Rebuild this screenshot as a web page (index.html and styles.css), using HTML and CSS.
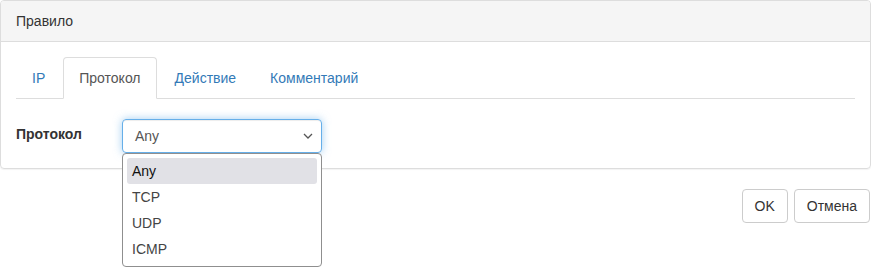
FILE: index.html
```html
<!DOCTYPE html>
<html lang="ru">
<head>
  <meta charset="UTF-8" />
  <title>Правило</title>
  <link rel="stylesheet" href="styles.css">
</head>
<body>

<div class="panel">
  <div class="panel-heading">Правило</div>
  <div class="panel-body">
    <ul class="tabs">
      <li><a href="#ip">IP</a></li>
      <li class="active"><a href="#proto">Протокол</a></li>
      <li><a href="#action">Действие</a></li>
      <li><a href="#comment">Комментарий</a></li>
    </ul>
    <div class="form-row">
      <label class="form-label">Протокол</label>
      <div class="select-wrap">
        <div class="select focused">
          <span>Any</span>
          <svg class="chevron" width="10" height="6" viewBox="0 0 10 6"><path d="M1 1l4 4 4-4" fill="none" stroke="#555" stroke-width="1.3"/></svg>
        </div>
        <ul class="dropdown">
          <li class="selected">Any</li>
          <li>TCP</li>
          <li>UDP</li>
          <li>ICMP</li>
        </ul>
      </div>
    </div>
  </div>
</div>

<div class="actions">
  <button class="btn">OK</button>
  <button class="btn">Отмена</button>
</div>

</body>
</html>
```
FILE: styles.css
```css
html, body {
  min-height: 268px;
}
body {
  margin: 0;
  font-family: "Liberation Sans", Arial, sans-serif;
  font-size: 14px;
  line-height: 20px;
  color: #333;
  background: #fff;
}
.panel {
  width: 869px;
  border: 1px solid #ddd;
  border-radius: 4px;
  box-shadow: 0 1px 1px rgba(0, 0, 0, .05);
}
.panel-heading {
  background: #f5f5f5;
  border-bottom: 1px solid #ddd;
  border-radius: 3px 3px 0 0;
  padding: 10px 15px;
}
.panel-body {
  padding: 15px;
}
.tabs {
  display: flex;
  list-style: none;
  margin: 0;
  padding: 0;
  border-bottom: 1px solid #ddd;
}
.tabs li {
  margin-right: 2px;
  margin-bottom: -1px;
}
.tabs a {
  display: block;
  padding: 10px 15px;
  border: 1px solid transparent;
  border-radius: 4px 4px 0 0;
  color: #337ab7;
  text-decoration: none;
}
.tabs .active a {
  color: #555;
  background: #fff;
  border-color: #ddd #ddd transparent;
}
.form-row {
  display: flex;
  margin-top: 20px;
}
.form-label {
  width: 106px;
  font-weight: bold;
  padding-top: 5px;
}
.select-wrap {
  position: relative;
  z-index: 10;
}
.select {
  box-sizing: border-box;
  width: 200px;
  height: 34px;
  border: 1px solid #ccc;
  border-radius: 4px;
  padding: 6px 12px;
  display: flex;
  align-items: center;
  justify-content: space-between;
  color: #555;
}
.select.focused {
  border-color: #66afe9;
  box-shadow: inset 0 1px 1px rgba(0, 0, 0, .075), 0 0 8px rgba(102, 175, 233, .6);
}
.chevron {
  margin-right: -4px;
}
.dropdown {
  position: absolute;
  top: 34px;
  left: 0;
  box-sizing: border-box;
  width: 200px;
  margin: 0;
  padding: 4px;
  list-style: none;
  background: #fff;
  border: 1px solid #8f8f8f;
  border-radius: 4px;
}
.dropdown li {
  height: 26px;
  line-height: 26px;
  padding-left: 5px;
  border-radius: 3px;
  color: #444;
}
.dropdown li.selected {
  background: #e1e1e6;
  color: #111;
}
.actions {
  display: flex;
  justify-content: flex-end;
  gap: 6px;
  width: 870px;
  margin-top: 20px;
}
.btn {
  font-family: inherit;
  font-size: 14px;
  line-height: 20px;
  padding: 6px 12px;
  color: #333;
  background: #fff;
  border: 1px solid #ccc;
  border-radius: 4px;
}
```
